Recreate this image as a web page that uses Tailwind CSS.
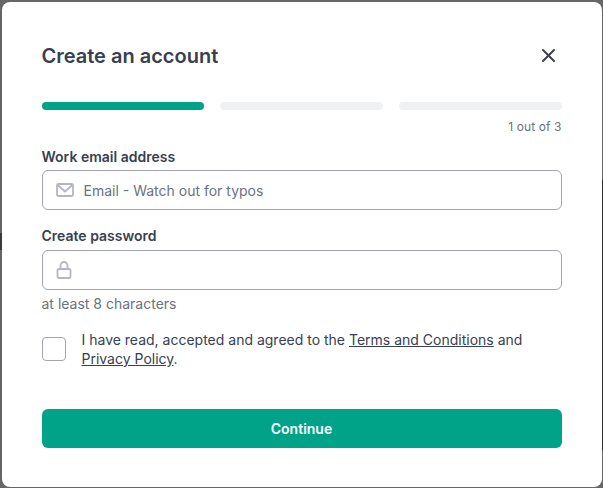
<!DOCTYPE html>
<html lang="en">
<head>
    <meta charset="UTF-8">
    <title>Create an account</title>
    <script src="https://cdn.jsdelivr.net/npm/@tailwindcss/browser@4"></script>
</head>
<body class="relative bg-[#666666] h-[488px] overflow-hidden font-['Inter',sans-serif]">
    <!-- page behind the modal, only a sliver shows at the edges -->
    <div class="absolute left-0 top-[233px] w-[2px] h-[17px] bg-[#3a3a3a]"></div>
    <div class="absolute right-0 top-[180px] w-[1px] h-[270px] bg-[#2b2b2b]"></div>

    <div class="relative bg-white ml-[2px] mr-[1px] mt-[2px] h-[485px] rounded-[8px] pl-[39.5px] pr-[40.5px] pt-[40px]">
        <div class="flex justify-between items-center h-[28px]">
            <h1 class="text-[20px] leading-[28px] font-semibold text-[#374151]">Create an account</h1>
            <button class="w-[24px] h-[24px] mr-[0.5px] flex items-center justify-center text-[#3f3f4a]">
                <svg width="24" height="24" viewBox="0 0 24 24" fill="none" stroke="currentColor" stroke-width="2" stroke-linecap="round"><path d="M6 6 17 17M17 6 6 17"/></svg>
            </button>
        </div>
        <div class="flex gap-[16px] mt-[32px]">
            <div class="flex-1 h-[8px] rounded-full bg-[#00a388]"></div>
            <div class="flex-1 h-[8px] rounded-full bg-[#f0f1f3]"></div>
            <div class="flex-1 h-[8px] rounded-full bg-[#f0f1f3]"></div>
        </div>
        <p class="text-right text-[12px] leading-[16px] tracking-[0.1px] text-[#6b7280] mt-[9px]">1 out of 3</p>

        <label class="block text-[14px] leading-[20px] font-semibold text-[#374151] mt-[12px]">Work email address</label>
        <div class="flex items-center h-[40px] mt-[3px] border border-[#a3a5b3] rounded-[6px] pl-[13px]">
            <svg width="18" height="16" viewBox="0 0 18 16" fill="none" stroke="#b4b6c2" stroke-width="1.8" stroke-linejoin="round"><rect x="1" y="2" width="16" height="12" rx="1.5"/><path d="M1.5 3 9 9.5 16.5 3"/></svg>
            <span class="ml-[10px] text-[14px] text-[#6b7280]">Email - Watch out for typos</span>
        </div>

        <label class="block text-[14px] leading-[20px] font-semibold text-[#374151] mt-[16px]">Create password</label>
        <div class="flex items-center h-[40px] mt-[4px] border border-[#a3a5b3] rounded-[6px] pl-[13.5px]">
            <svg width="16" height="18" viewBox="0 0 16 18" fill="none" stroke="#b4b6c2" stroke-width="1.8"><rect x="1.5" y="8" width="13" height="9" rx="1.5"/><path d="M4.5 8V4.5a3.5 3.5 0 0 1 7 0V8"/></svg>
        </div>
        <p class="text-[14px] leading-[20px] text-[#6b7280] mt-[4px]">at least 8 characters</p>

        <div class="flex items-start mt-[16px]">
            <div class="w-[24px] h-[24px] mt-[7px] shrink-0 border border-[#a3a5b3] rounded-[4px]"></div>
            <p class="ml-[16px] text-[14px] leading-[19px] text-[#374151]">I have read, accepted and agreed to the <a class="underline" href="#">Terms and Conditions</a> and <a class="underline" href="#">Privacy Policy</a>.</p>
        </div>

        <button class="block w-full h-[39px] mt-[41px] bg-[#00a388] rounded-[6px] text-white text-[14px] font-semibold">Continue</button>
    </div>
</body>
</html>
